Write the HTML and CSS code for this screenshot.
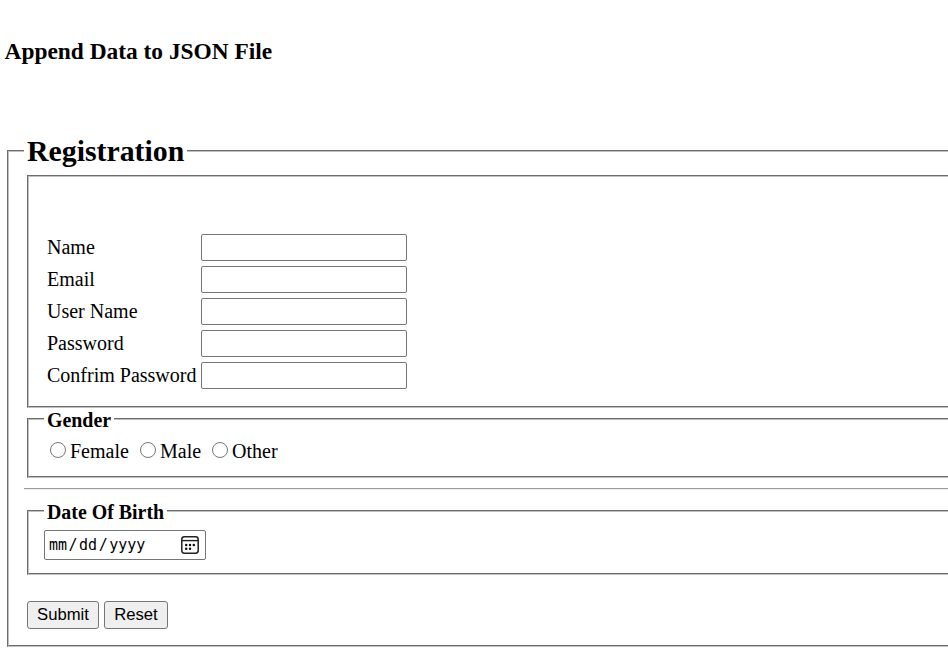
FILE: index.html
```html
<!DOCTYPE html>
<html lang="en">
<head>
<meta charset="utf-8">
<title>Append Data to JSON File</title>
<link rel="stylesheet" href="styles.css">
</head>
<body>
<h3 class="title">Append Data to JSON File</h3>
<form class="form">
<fieldset class="registration">
<legend class="main-legend">Registration</legend>
<fieldset class="details">
<div class="row"><label for="name">Name</label><input class="text" id="name" type="text"></div>
<div class="row"><label for="email">Email</label><input class="text" id="email" type="text"></div>
<div class="row"><label for="user">User Name</label><input class="text" id="user" type="text"></div>
<div class="row"><label for="pass">Password</label><input class="text" id="pass" type="password"></div>
<div class="row"><label for="confirm">Confrim Password</label><input class="text" id="confirm" type="password"></div>
</fieldset>
<fieldset class="gender">
<legend class="legend">Gender</legend>
<div class="choices">
<label class="choice female"><input type="radio" name="gender">Female</label>
<label class="choice male"><input type="radio" name="gender">Male</label>
<label class="choice other"><input type="radio" name="gender">Other</label>
</div>
</fieldset>
<hr class="rule">
<fieldset class="birth">
<legend class="legend">Date Of Birth</legend>
<div class="date"><span>mm</span><span class="slash">/</span><span>dd</span><span class="slash">/</span><span>yyyy</span>
<svg class="calendar" width="20" height="20" viewBox="0 0 20 20"><rect x="1.8" y="1.8" width="16.4" height="16.4" rx="2.6" fill="none" stroke="#222" stroke-width="1.5"/><path d="M2 5.6h16" stroke="#222" stroke-width="1.4"/><g fill="#111"><circle cx="6.2" cy="10" r="1.25"/><circle cx="10" cy="10" r="1.25"/><circle cx="13.8" cy="10" r="1.25"/><circle cx="6.2" cy="13.8" r="1.25"/><circle cx="10" cy="13.8" r="1.25"/></g></svg>
</div>
</fieldset>
<div class="actions"><button class="btn submit" type="button">Submit</button><button class="btn reset" type="button">Reset</button></div>
</fieldset>
</form>
</body>
</html>
```
FILE: styles.css
```css
* { box-sizing: border-box; }
body {
  margin: 0;
  background: #fff;
  color: #000;
  font: 20px/22px "Liberation Serif", "Times New Roman", serif;
}
.title {
  margin: 0;
  padding: 38px 0 0 4.5px;
  height: 134px;
  font-size: 23.4px;
  line-height: 26px;
}
.form { padding-left: 7px; }
fieldset {
  margin: 0;
  min-width: 0;
  border: 2px groove #c0c0c0;
  border-right: 0;
}
legend { font-weight: bold; }
.registration { height: 513px; padding: 7px 0 0 15px; }
.main-legend { padding: 0 3px; font-size: 29.8px; line-height: 34px; }
.details { height: 233px; margin-left: 3px; padding: 54px 0 0 18px; }
.row { display: flex; align-items: center; height: 32px; }
.row label { width: 154px; padding-bottom: 1px; }
.row label, .choice { white-space: nowrap; }
.text {
  width: 206px;
  height: 27px;
  margin: 0;
  border: 1px solid #767676;
  border-radius: 2px;
  background: #fff;
}
.gender { height: 70px; margin-left: 3px; padding: 0 0 0 15px; }
.legend { padding: 2px 3px 0; font-size: 19.9px; line-height: 20px; }
.choices { display: flex; padding: 10px 0 0 6px; }
.choice { display: flex; }
.choice input {
  appearance: none;
  width: 16px;
  height: 16px;
  margin: 2px 4px 0 0;
  border: 1px solid #767676;
  border-radius: 50%;
}
.female { width: 90px; }
.male { width: 72px; }
.rule { margin: 10px 0; height: 2px; border: 0; border-top: 1px solid #9a9a9a; border-bottom: 1px solid #eee; }
.birth { height: 75px; margin-left: 3px; padding: 8px 0 0 15px; }
.date {
  display: flex;
  align-items: center;
  width: 162px;
  height: 30px;
  padding: 0 5px 0 4px;
  border: 1px solid #767676;
  border-radius: 2px;
  font: 15px/20px "DejaVu Sans Mono", monospace;
}
.slash { width: 9px; margin: 0 1.5px; }
.calendar { margin-left: auto; }
.actions { display: flex; gap: 5px; margin: 26px 0 0 3px; }
.btn {
  height: 28px;
  padding: 0;
  border: 1px solid #767676;
  border-radius: 3px;
  background: #efefef;
  color: #000;
  font: 16.67px/20px "Liberation Sans", Arial, sans-serif;
}
.submit { width: 72px; }
.reset { width: 64px; }
```
